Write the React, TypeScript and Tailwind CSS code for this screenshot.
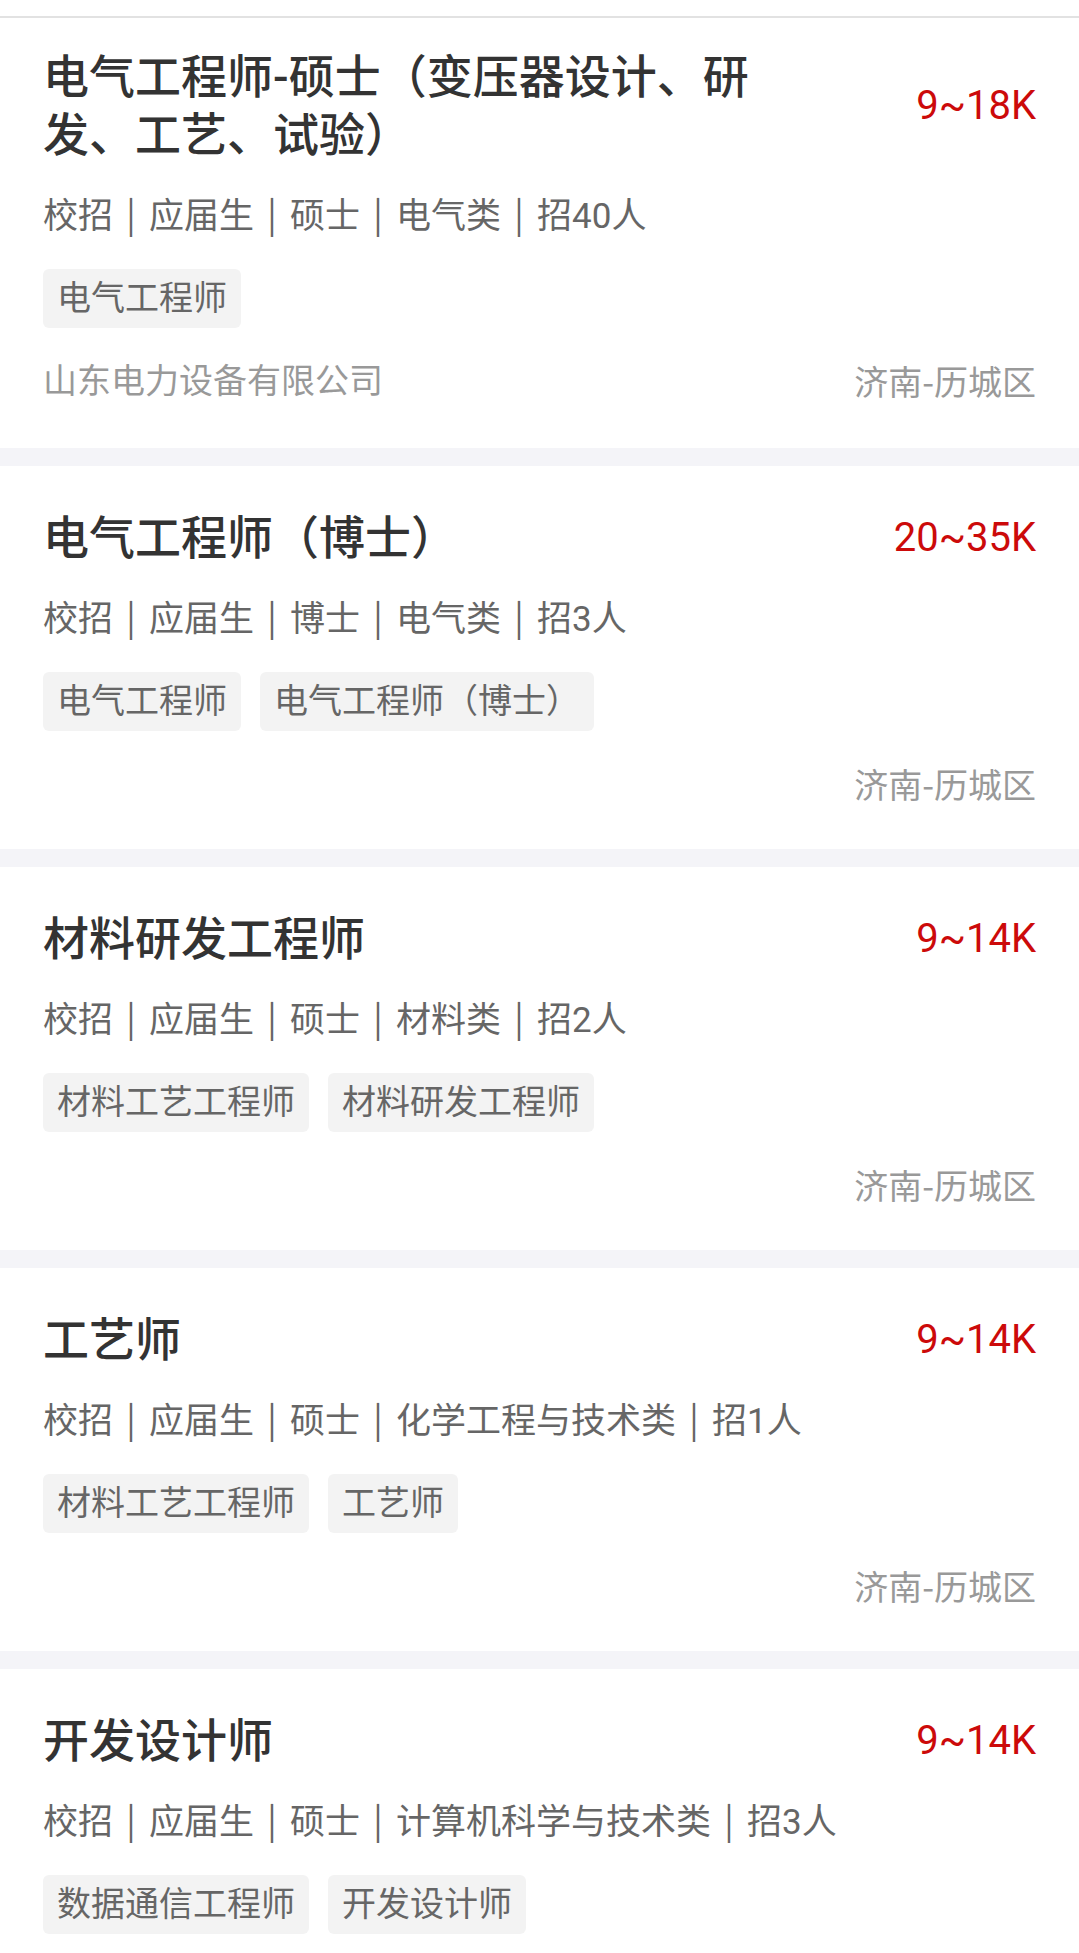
import React from "react";

type Job = {
  title: string;
  salary: string;
  info: string[];
  tags: string[];
  company?: string;
  location: string;
};

const jobs: Job[] = [
  {
    title: "电气工程师-硕士（变压器设计、研发、工艺、试验）",
    salary: "9~18K",
    info: ["校招", "应届生", "硕士", "电气类", "招40人"],
    tags: ["电气工程师"],
    company: "山东电力设备有限公司",
    location: "济南-历城区",
  },
  {
    title: "电气工程师（博士）",
    salary: "20~35K",
    info: ["校招", "应届生", "博士", "电气类", "招3人"],
    tags: ["电气工程师", "电气工程师（博士）"],
    location: "济南-历城区",
  },
  {
    title: "材料研发工程师",
    salary: "9~14K",
    info: ["校招", "应届生", "硕士", "材料类", "招2人"],
    tags: ["材料工艺工程师", "材料研发工程师"],
    location: "济南-历城区",
  },
  {
    title: "工艺师",
    salary: "9~14K",
    info: ["校招", "应届生", "硕士", "化学工程与技术类", "招1人"],
    tags: ["材料工艺工程师", "工艺师"],
    location: "济南-历城区",
  },
  {
    title: "开发设计师",
    salary: "9~14K",
    info: ["校招", "应届生", "硕士", "计算机科学与技术类", "招3人"],
    tags: ["数据通信工程师", "开发设计师"],
    location: "济南-历城区",
  },
];

function Card({ job, first }: { job: Job; first: boolean }) {
  return (
    <div
      className={
        "bg-white pl-[43px] pr-[43px] " + (first ? "pt-[30px] pb-[44px]" : "pt-[43px] pb-[42px]")
      }
    >
      <div className="flex items-center justify-between">
        <div className="w-[720px] text-[46px] font-medium leading-[58px] text-[#333333]">
          {job.title}
        </div>
        <div className="shrink-0 text-[40px] leading-[58px] text-[#cc0a0a]">{job.salary}</div>
      </div>
      <div className="mt-[28px] flex h-[50px] items-center whitespace-nowrap text-[35px] leading-[50px] text-[#666666]">
        {job.info.map((s, i) => (
          <React.Fragment key={i}>
            {i > 0 && (
              <span className="mx-[13px] flex h-[50px] w-[10px] -translate-y-[5px] justify-center font-['Noto_Sans_CJK_SC',sans-serif] leading-[50px]">
                |
              </span>
            )}
            <span className="h-[50px] leading-[50px]">{s}</span>
          </React.Fragment>
        ))}
      </div>
      <div className="mt-[27px] flex gap-[19px]">
        {job.tags.map((t) => (
          <div
            key={t}
            className="flex h-[59px] items-center rounded-[6px] bg-[#f3f3f3] px-[14px] text-[34px] text-[#666666]"
          >
            {t}
          </div>
        ))}
      </div>
      <div className="mt-[30px] flex h-[46px] items-center justify-between text-[34px] leading-[46px] text-[#999999]">
        <span>{job.company ?? ""}</span>
        <span className="h-[46px] font-['Noto_Sans_CJK_SC',sans-serif] leading-[46px]">
          {job.location}
        </span>
      </div>
    </div>
  );
}

export default function App() {
  return (
    <div
      className="min-h-screen bg-[#f4f4f8]"
      style={{ fontFamily: 'Roboto, "Noto Sans CJK SC", sans-serif' }}
    >
      <div className="h-[16px] bg-white" />
      <div className="h-[2px] bg-[#e2e2e2]" />
      <div className="flex flex-col gap-[18px]">
        {jobs.map((j, i) => (
          <Card key={i} job={j} first={i === 0} />
        ))}
      </div>
    </div>
  );
}
